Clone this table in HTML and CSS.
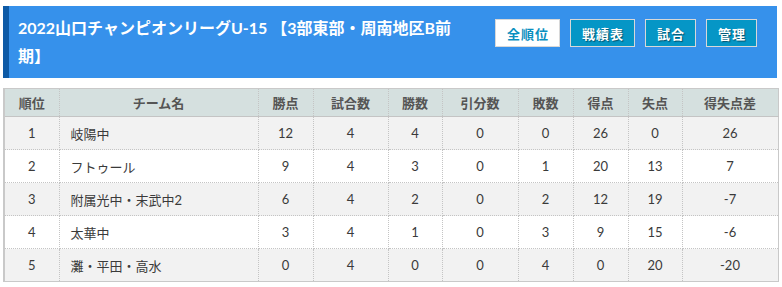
FILE: index.html
```html
<!DOCTYPE html>
<html lang="ja">
<head>
<meta charset="utf-8">
<link rel="stylesheet" href="styles.css">
</head>
<body>
<div class="page">
  <header class="league-head">
    <h2 class="league-title">2022山口チャンピオンリーグU-15 【3部東部・周南地区B前期】</h2>
    <nav class="tabs">
      <a class="tab tab-active">全順位</a>
      <a class="tab">戦績表</a>
      <a class="tab">試合</a>
      <a class="tab">管理</a>
    </nav>
  </header>
  <table class="standings">
    <colgroup>
      <col class="c-rank"><col class="c-name"><col class="c-pt"><col class="c-games"><col class="c-win"><col class="c-draw"><col class="c-lose"><col class="c-gf"><col class="c-ga"><col class="c-gd">
    </colgroup>
    <thead>
      <tr><th>順位</th><th>チーム名</th><th>勝点</th><th>試合数</th><th>勝数</th><th>引分数</th><th>敗数</th><th>得点</th><th>失点</th><th>得失点差</th></tr>
    </thead>
    <tbody>
      <tr><td>1</td><td class="name">岐陽中</td><td>12</td><td>4</td><td>4</td><td>0</td><td>0</td><td>26</td><td>0</td><td>26</td></tr>
      <tr><td>2</td><td class="name">フトゥール</td><td>9</td><td>4</td><td>3</td><td>0</td><td>1</td><td>20</td><td>13</td><td>7</td></tr>
      <tr><td>3</td><td class="name">附属光中・末武中2</td><td>6</td><td>4</td><td>2</td><td>0</td><td>2</td><td>12</td><td>19</td><td>-7</td></tr>
      <tr><td>4</td><td class="name">太華中</td><td>3</td><td>4</td><td>1</td><td>0</td><td>3</td><td>9</td><td>15</td><td>-6</td></tr>
      <tr><td>5</td><td class="name">灘・平田・高水</td><td>0</td><td>4</td><td>0</td><td>0</td><td>4</td><td>0</td><td>20</td><td>-20</td></tr>
    </tbody>
  </table>
</div>
</body>
</html>
```

FILE: styles.css
```css
* { box-sizing: border-box; }
html, body { margin: 0; padding: 0; background: #fff; }
body {
  font-family: Lato, "Noto Sans CJK JP", sans-serif;
  color: #333;
}
.page {
  padding: 6px 5px 0 3px;
}
.league-head {
  display: flex;
  align-items: flex-start;
  background: #3691eb;
  border-left: 6px solid #0d5aa6;
  padding: 8px 20px 8px 9px;
  height: 72px;
}
.league-title {
  flex: 1;
  margin: 0;
  color: #fff;
  font-size: 16px;
  font-weight: bold;
  line-height: 28px;
  max-width: 452px;
}
.tabs {
  display: flex;
  gap: 10px;
  margin-top: 5px;
  margin-left: auto;
}
.tab {
  display: flex;
  align-items: center;
  justify-content: center;
  height: 28px;
  padding: 0 10px 0 11px;
  letter-spacing: 1px;
  background: #0596c6;
  border: 1px solid #d8d8d8;
  color: #fff;
  font-family: "Noto Sans CJK JP", sans-serif;
  font-size: 13px;
  font-weight: bold;
  text-shadow: 1px 1px 1px rgba(0,0,0,0.45);
}
.tab-active {
  background: #fff;
  color: #0a8fc0;
  text-shadow: none;
}
.standings {
  width: 774px;
  margin-top: 10px;
  border-collapse: collapse;
  table-layout: fixed;
  border: 1px solid #c9c9c9;
  border-left-width: 2px;
  font-size: 13px;
}
.c-rank { width: 55px; }
.c-name { width: 199px; }
.c-pt { width: 55px; }
.c-games { width: 75px; }
.c-win { width: 54px; }
.c-draw { width: 76px; }
.c-lose { width: 55px; }
.c-gf { width: 55px; }
.c-ga { width: 54px; }
.c-gd { width: 96px; }
.standings th {
  background: #d5e0df;
  color: #555;
  font-weight: bold;
  height: 28px;
  padding: 0;
  text-align: center;
  border: 1px dotted #c4c4c4;
  border-top: 1px solid #c9c9c9;
  border-bottom: 1px solid #c4c4c4;
}
.standings td {
  height: 33px;
  padding: 0;
  text-align: center;
  border: 1px dotted #c4c4c4;
  color: #3a3a3a;
}
.standings td.name {
  text-align: left;
  padding-left: 11px;
}
.standings tbody tr:nth-child(odd) td { background: #f2f2f2; }
.standings tbody tr:nth-child(even) td { background: #fff; }
```
